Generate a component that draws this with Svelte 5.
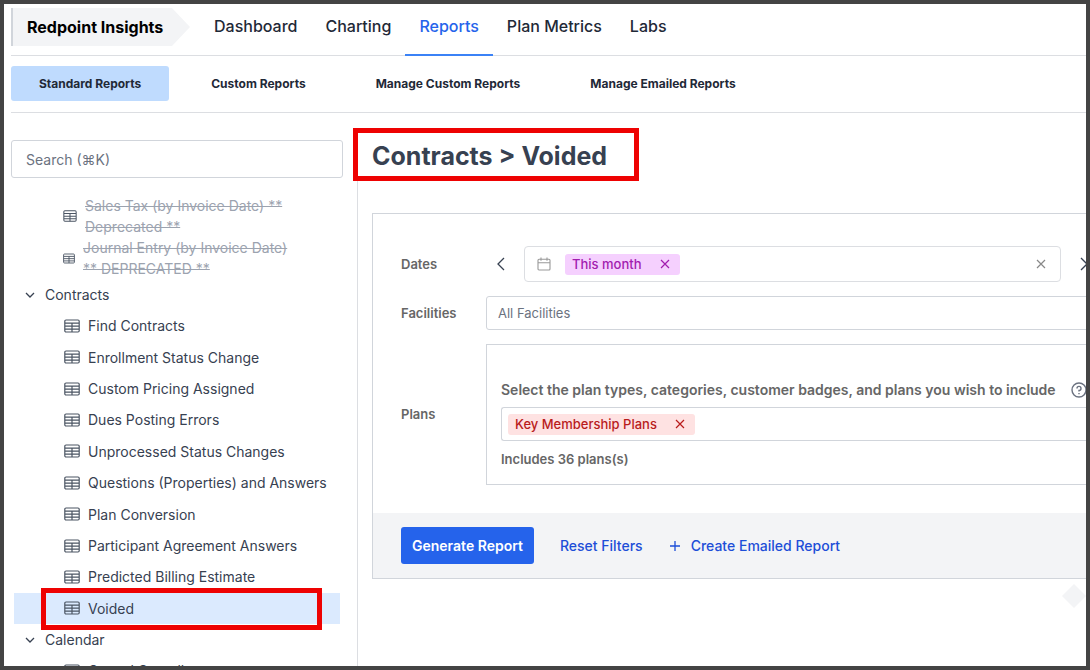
<script lang="ts">
  type Tab = { label: string; active?: boolean };

  const tabs: Tab[] = [
    { label: 'Dashboard' },
    { label: 'Charting' },
    { label: 'Reports', active: true },
    { label: 'Plan Metrics' },
    { label: 'Labs' }
  ];

  const subTabs: Tab[] = [
    { label: 'Standard Reports', active: true },
    { label: 'Custom Reports' },
    { label: 'Manage Custom Reports' },
    { label: 'Manage Emailed Reports' }
  ];

  const deprecated = [
    'Sales Tax (by Invoice Date) ** Deprecated **',
    'Journal Entry (by Invoice Date) ** DEPRECATED **'
  ];

  const contracts = [
    'Find Contracts',
    'Enrollment Status Change',
    'Custom Pricing Assigned',
    'Dues Posting Errors',
    'Unprocessed Status Changes',
    'Questions (Properties) and Answers',
    'Plan Conversion',
    'Participant Agreement Answers',
    'Predicted Billing Estimate',
    'Voided'
  ];

  let selected = $state('Voided');
  let search = $state('');
</script>

{#snippet tableIcon()}
  <svg class="table-icon" viewBox="0 0 16 14" fill="none" stroke="currentColor" stroke-width="1.2" aria-hidden="true">
    <rect x="0.8" y="1" width="14.4" height="12" rx="1.2" />
    <path d="M1 4.2h14M1 7.2h14M1 10.2h14M8 4.2v8.8" />
  </svg>
{/snippet}

{#snippet chevron()}
  <svg class="chevron" viewBox="0 0 10 10" fill="none" stroke="currentColor" stroke-width="1.3" aria-hidden="true">
    <path d="M1 3l4 4 4-4" />
  </svg>
{/snippet}

{#snippet cross()}
  <svg class="cross" viewBox="0 0 10 10" fill="none" stroke="currentColor" stroke-width="1.2" aria-hidden="true">
    <path d="M1 1l8 8M9 1l-8 8" />
  </svg>
{/snippet}

<div class="app">
  <header class="topbar">
    <div class="brand">Redpoint Insights</div>
    <nav class="tabs">
      {#each tabs as tab}
        <a href="#top" class:active={tab.active}>{tab.label}</a>
      {/each}
    </nav>
  </header>

  <nav class="subtabs">
    {#each subTabs as tab}
      <a href="#sub" class:active={tab.active}>{tab.label}</a>
    {/each}
  </nav>

  <div class="body">
    <aside class="sidebar">
      <input class="search" type="text" placeholder="Search (⌘K)" aria-label="Search" bind:value={search} />
      <div class="tree">
        {#each deprecated as name, i}
          <button class="node old" class:small={i === 1}>
            {@render tableIcon()}
            <span>{name}</span>
          </button>
        {/each}
        <button class="group">{@render chevron()}Contracts</button>
        <div class="children">
          {#each contracts as name}
            <button class="node" class:selected={selected === name} onclick={() => (selected = name)}>
              {@render tableIcon()}
              <span>{name}</span>
            </button>
          {/each}
        </div>
        <button class="group">{@render chevron()}Calendar</button>
        <button class="node">
          {@render tableIcon()}
          <span>Cancel Overall</span>
        </button>
      </div>
    </aside>

    <main class="main">
      <h1>Contracts &gt; {selected}</h1>

      <form class="panel" onsubmit={(e) => e.preventDefault()}>
        <div class="fields">
          <label class="label" for="dates">Dates</label>
          <div class="dates">
            <button type="button" class="step" aria-label="Previous">
              <svg viewBox="0 0 8 14" fill="none" stroke="currentColor" stroke-width="1.3"><path d="M7 1L1 7l6 6" /></svg>
            </button>
            <div class="box date-box">
              <svg class="calendar" viewBox="0 0 14 14" fill="none" stroke="currentColor" stroke-width="1.1" aria-hidden="true">
                <rect x="1" y="2.2" width="12" height="10.8" rx="1" />
                <path d="M1 5.8h12M4 0.4v3.4M10 0.4v3.4" />
              </svg>
              <span class="chip purple">
                This month
                <button type="button" aria-label="Remove This month">{@render cross()}</button>
              </span>
              <input id="dates" type="text" />
              <button type="button" class="clear" aria-label="Clear">{@render cross()}</button>
            </div>
            <button type="button" class="step" aria-label="Next">
              <svg viewBox="0 0 8 14" fill="none" stroke="currentColor" stroke-width="1.3"><path d="M1 1l6 6-6 6" /></svg>
            </button>
          </div>

          <label class="label" for="facilities">Facilities</label>
          <input id="facilities" class="box facilities" type="text" placeholder="All Facilities" />

          <label class="label" for="plans">Plans</label>
          <div class="plans">
            <div class="plans-title">
              Select the plan types, categories, customer badges, and plans you wish to include
              <svg class="help" viewBox="0 0 16 16" fill="none" stroke="currentColor" stroke-width="1.4" aria-hidden="true">
                <circle cx="8" cy="8" r="7" />
                <path d="M6 6.4a2 2 0 1 1 2 2v1.2M8 11v1.2" />
              </svg>
            </div>
            <div class="box plan-box">
              <span class="chip red">
                Key Membership Plans
                <button type="button" aria-label="Remove Key Membership Plans">{@render cross()}</button>
              </span>
              <input id="plans" type="text" />
            </div>
            <div class="count">Includes 36 plans(s)</div>
          </div>
        </div>

        <div class="actions">
          <button class="primary">Generate Report</button>
          <button type="button" class="link">Reset Filters</button>
          <button type="button" class="link create">
            <svg viewBox="0 0 12 12" fill="none" stroke="currentColor" stroke-width="1.3" aria-hidden="true"><path d="M6 1v10M1 6h10" /></svg>
            Create Emailed Report
          </button>
        </div>
      </form>
      <div class="diamond"></div>
    </main>
  </div>
</div>

<style>
  :global(body) {
    margin: 0;
    background: #444;
  }

  .app,
  .app * {
    box-sizing: border-box;
  }

  .app {
    height: 100vh;
    display: flex;
    flex-direction: column;
    border: 4px solid #444;
    padding-left: 7px;
    overflow: hidden;
    background: #fff;
    color: #374151;
    font-family: Inter, 'Liberation Sans', 'DejaVu Sans', sans-serif;
    font-size: 14px;
    line-height: 21px;
  }

  button,
  input {
    font: inherit;
    color: inherit;
    background: none;
    border: 0;
    padding: 0;
    outline: none;
  }

  a {
    color: inherit;
    text-decoration: none;
  }

  svg {
    display: block;
    flex: none;
  }

  /* top navigation */
  .topbar {
    flex: none;
    display: flex;
    height: 52px;
    border-bottom: 1px solid #dcdee2;
  }

  .brand {
    flex: none;
    width: 179px;
    height: 38px;
    margin-top: 4px;
    padding-left: 14px;
    border-left: 2px solid #d1d5db;
    background: #f3f4f6;
    clip-path: polygon(0 0, 161px 0, 100% 50%, 161px 100%, 0 100%);
    color: #000;
    font-size: 16px;
    font-weight: 700;
    line-height: 38px;
  }

  .tabs {
    display: flex;
    margin-left: 10px;
    margin-bottom: -1px;
  }

  .tabs a {
    padding: 0 14px;
    border-bottom: 2px solid transparent;
    color: #1f2937;
    font-size: 16px;
    font-weight: 500;
    line-height: 44px;
  }

  .tabs .active {
    border-color: #3b82f6;
    color: #2563eb;
  }

  .subtabs {
    flex: none;
    display: flex;
    gap: 14px;
    padding: 10px 0 11px;
    border-bottom: 1px solid #dcdee2;
  }

  .subtabs a {
    padding: 0 28px;
    border-radius: 3px;
    color: #1f2937;
    font-size: 12px;
    font-weight: 700;
    line-height: 35px;
  }

  .subtabs .active {
    background: #bfdbfe;
  }

  .body {
    flex: 1;
    min-height: 0;
    display: flex;
    padding-top: 27px;
  }

  /* report tree */
  .sidebar {
    flex: none;
    width: 347px;
    display: flex;
    flex-direction: column;
    padding-right: 14px;
    border-right: 1px solid #dcdee2;
  }

  .search {
    flex: none;
    height: 38px;
    padding: 0 14px;
    border: 1px solid #d1d5db;
    border-radius: 3px;
  }

  .search::placeholder {
    color: #6b7280;
    opacity: 1;
  }

  .tree {
    flex: 1;
    min-height: 0;
    display: flex;
    flex-direction: column;
    margin: 17px 3px 0;
    overflow: hidden;
  }

  .tree button {
    flex: none;
    display: flex;
    align-items: center;
    text-align: left;
  }

  .table-icon {
    width: 16px;
    height: 14px;
    color: #4b5563;
  }

  .node {
    min-height: 31px;
    gap: 8px;
    padding: 0 50px;
  }

  .node.old {
    padding: 0 36px 0 49px;
  }

  .old .table-icon {
    width: 14px;
    height: 12px;
  }

  .old.small .table-icon {
    width: 12px;
    height: 11px;
  }

  .old span {
    color: #9ca3af;
    text-decoration: line-through;
  }

  .tree .group {
    height: 31px;
    gap: 10px;
    padding-left: 11px;
  }

  .chevron {
    width: 10px;
    height: 10px;
  }

  .children {
    flex: none;
    min-height: 314px;
    display: flex;
    flex-direction: column;
  }

  .tree .children .node {
    flex: 1;
    position: relative;
    white-space: nowrap;
  }

  .selected {
    background: #dbeafe;
  }

  /* red call-outs */
  .selected::after,
  h1::after {
    content: '';
    position: absolute;
    border: 5px solid #ee0202;
    pointer-events: none;
  }

  .selected::after {
    inset: -5px 18px -6px 27px;
  }

  /* report form */
  .main {
    flex: 1;
    min-width: 0;
    padding-left: 14px;
  }

  h1 {
    position: relative;
    width: fit-content;
    margin: 0 0 41px;
    font-size: 25px;
    font-weight: 700;
    line-height: 32px;
  }

  h1::after {
    inset: -12px -32px -9px -19px;
  }

  .panel {
    margin-right: -42px;
    border: 1px solid #d1d5db;
  }

  .fields {
    display: grid;
    grid-template-columns: 85px minmax(0, 1fr);
    align-items: center;
    row-gap: 14px;
    padding: 32px 28px 28px;
  }

  .label,
  .count {
    color: #666;
    font-size: 13px;
    font-weight: 600;
  }

  .box {
    display: flex;
    align-items: center;
    min-width: 0;
    border: 1px solid #d1d5db;
    border-radius: 3px;
  }

  .box input {
    flex: 1;
    min-width: 0;
  }

  .dates {
    display: flex;
    align-items: center;
    gap: 8px;
  }

  .step {
    flex: none;
    width: 30px;
    display: flex;
    justify-content: center;
  }

  .step svg {
    width: 8px;
    height: 14px;
  }

  .date-box {
    flex: 1;
    height: 36px;
    padding: 0 14px 0 12px;
    border-color: #dcdee2;
    border-radius: 4px;
  }

  .calendar {
    width: 14px;
    height: 14px;
    margin-right: 14px;
    color: #999;
  }

  .chip {
    display: flex;
    align-items: center;
    gap: 18px;
    padding: 0 10px 0 7px;
    border-radius: 3px;
    font-size: 13px;
    font-weight: 500;
  }

  .purple {
    background: #f5d0fe;
    color: #a21caf;
  }

  .red {
    background: #fee2e2;
    color: #b91c1c;
  }

  .cross {
    width: 10px;
    height: 10px;
  }

  .clear {
    color: #888;
  }

  .facilities {
    height: 34px;
    padding: 0 11px;
    font-size: 13px;
  }

  .facilities::placeholder {
    color: #6b7280;
    opacity: 1;
  }

  .plans {
    padding: 34px 0 14px 14px;
    border: 1px solid #d1d5db;
    white-space: nowrap;
  }

  .plans-title {
    display: flex;
    align-items: center;
    gap: 15px;
    color: #666;
    font-weight: 600;
  }

  .help {
    width: 16px;
    height: 16px;
    color: #6b7280;
  }

  .plan-box {
    height: 34px;
    margin: 7px 0 8px;
    padding: 0 6px;
    border-right: 0;
  }

  .actions {
    display: flex;
    align-items: center;
    gap: 26px;
    padding: 14px 28px;
    background: #f3f4f6;
  }

  .primary {
    height: 37px;
    padding: 0 11px;
    border-radius: 3px;
    background: #2563eb;
    color: #fff;
    font-weight: 600;
  }

  .link {
    display: flex;
    align-items: center;
    gap: 10px;
    color: #1d4ed8;
    font-weight: 500;
  }

  .create svg {
    width: 12px;
    height: 12px;
  }

  .diamond {
    width: 24px;
    height: 24px;
    margin: 5px 0 0 auto;
    background: #f3f4f6;
    clip-path: polygon(50% 0, 100% 50%, 50% 100%, 0 50%);
  }
</style>
